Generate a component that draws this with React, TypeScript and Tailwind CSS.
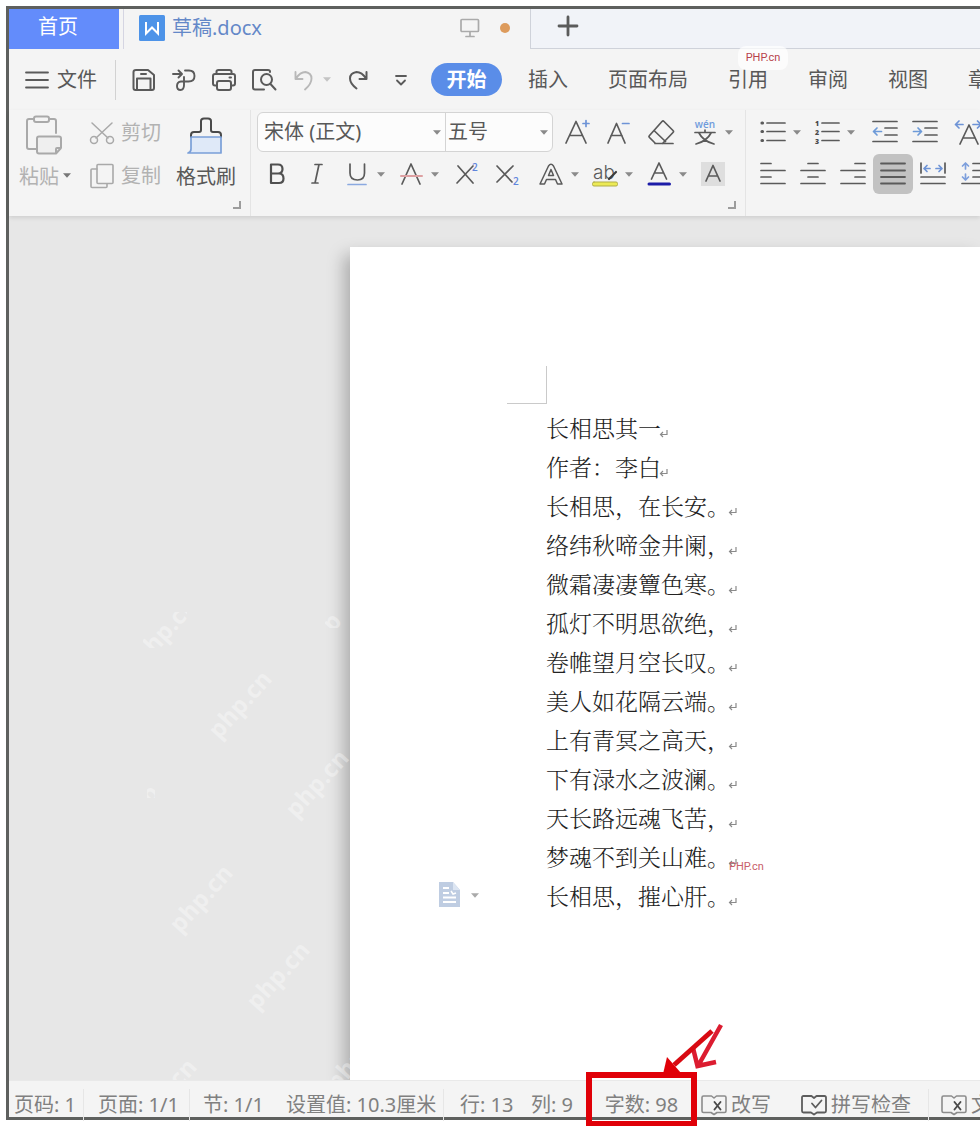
import React from "react";

const lines = [
  "长相思其一",
  "作者：李白",
  "长相思，在长安。",
  "络纬秋啼金井阑，",
  "微霜凄凄簟色寒。",
  "孤灯不明思欲绝，",
  "卷帷望月空长叹。",
  "美人如花隔云端。",
  "上有青冥之高天，",
  "下有渌水之波澜。",
  "天长路远魂飞苦，",
  "梦魂不到关山难。",
  "长相思，摧心肝。",
];

const menus = ["插入", "页面布局", "引用", "审阅", "视图", "章节"];

type IconProps = { w?: number; h?: number; sw?: number; className?: string; children: React.ReactNode };

function Icon({ w = 26, h = 26, sw = 1.7, className = "text-[#5a5a5a]", children }: IconProps) {
  return (
    <svg
      width={w}
      height={h}
      viewBox={`0 0 ${w} ${h}`}
      fill="none"
      stroke="currentColor"
      strokeWidth={sw}
      strokeLinecap="round"
      strokeLinejoin="round"
      className={`shrink-0 ${className}`}
      aria-hidden="true"
    >
      {children}
    </svg>
  );
}

function Caret({ className = "text-[#8a8a8a]" }: { className?: string }) {
  return (
    <svg width="8" height="5" viewBox="0 0 8 5" className={`shrink-0 ${className}`} aria-hidden="true">
      <path d="M0 0.3H8L4 4.7Z" fill="currentColor" />
    </svg>
  );
}

function Tool({ label, drop, active, children }: { label: string; drop?: boolean; active?: boolean; children: React.ReactNode }) {
  return (
    <button
      type="button"
      aria-label={label}
      className={`flex h-10 shrink-0 items-center ${drop ? "w-[54px]" : "w-10"} ${active ? "rounded-md bg-[#c2c2c2]" : ""}`}
    >
      <span className="flex w-10 shrink-0 items-center justify-center">{children}</span>
      {drop && <Caret />}
    </button>
  );
}

function Corner() {
  return (
    <button type="button" aria-label="更多设置" className="absolute right-2 bottom-[6px]">
      <svg width="10" height="9" viewBox="0 0 10 9" fill="none" stroke="#9c9c9c" strokeWidth="2" aria-hidden="true">
        <path d="M8 0V7H1" />
      </svg>
    </button>
  );
}

function BookX() {
  return (
    <Icon w={26} h={22} sw={1.6} className="text-[#8c8c8c]">
      <path d="M13 4L10.500 2H2.500Q1 2 1 3.500V17Q1 18.500 2.500 18.500H10L13 20.500L16 18.500H23.500Q25 18.500 25 17V3.500Q25 2 23.500 2H15.500L13 4" />
      <path d="M13.500 8L19.500 15.500M19.500 8L13.500 15.500" stroke="#4a4a4a" strokeWidth="1.900" />
    </Icon>
  );
}

function BookCheck() {
  return (
    <Icon w={26} h={22} sw={1.8} className="text-[#5c5c5c]">
      <path d="M13 4L10.500 2H2.500Q1 2 1 3.500V17Q1 18.500 2.500 18.500H10L13 20.500L16 18.500H23.500Q25 18.500 25 17V3.500Q25 2 23.500 2H15.500L13 4" />
      <path d="M11 9.500L14.500 13.500L20.500 6.500" />
    </Icon>
  );
}

function Sep() {
  return <span className="h-8 w-px shrink-0 bg-[#e6e6e6]" />;
}

function Mark({ className }: { className: string }) {
  return (
    <span
      aria-hidden="true"
      className={`pointer-events-none absolute flex items-center justify-center overflow-hidden font-['Open_Sans',sans-serif] text-2xl leading-none font-bold text-white/35 ${className}`}
    >
      <span className="-rotate-[48deg]">php.cn</span>
    </span>
  );
}

function TitleBar() {
  return (
    <header className="flex h-10 shrink-0 text-xl leading-none">
      <button type="button" className="w-[110px] shrink-0 bg-[#638cfb] pr-3 pb-1 text-center text-white">首页</button>
      <span className="w-[5px] shrink-0 border-r border-[#d5d5e2]" />
      <div className="flex w-[406px] shrink-0 items-center pb-[3px] pl-[15px]">
        <svg width="26" height="26" viewBox="0 0 26 26" className="shrink-0" aria-hidden="true">
          <rect width="26" height="26" rx="1.500" fill="#4d93e8" />
          <path d="M7 7V18.500L13 12.500L19 18.500V7" fill="none" stroke="#fff" strokeWidth="2" />
        </svg>
        <span className="ml-[7px] text-[#6488c8]">草稿.docx</span>
        <button type="button" aria-label="演示" className="mr-5 ml-auto">
          <Icon w={20} h={20} className="text-[#aaaaaa]">
            <rect x="1" y="1.500" width="17.500" height="12" rx="1" />
            <path d="M10 14V18M6 18.500H14" />
          </Icon>
        </button>
        <span className="mr-5 size-[10px] rounded-full bg-[#dd9b5c]" />
      </div>
      <div className="flex flex-1 items-center border-b border-l border-[#cfd2da] bg-[#f1f3f8] pb-[6px] pl-[26px]">
        <button type="button" aria-label="新建标签">
          <Icon w={22} h={22} sw={2.8} className="text-[#5b5b5b]">
            <path d="M11 2V20M2 11H20" />
          </Icon>
        </button>
      </div>
    </header>
  );
}

function MenuBar() {
  return (
    <nav className="relative flex h-[61px] shrink-0 items-center text-xl">
      <button type="button" className="flex w-[106px] shrink-0 items-center pl-4">
        <Icon w={24} h={18} sw={1.8}>
          <path d="M1 1.500H23M1 9H23M1 16.500H23" />
        </Icon>
        <span className="ml-2">文件</span>
      </button>
      <span className="mr-2 h-10 w-px shrink-0 bg-[#d2d2d2]" />
      <Tool label="保存">
        <Icon w={24} h={24} sw={2}>
          <path d="M1.500 20V4Q1.500 2 4 2H16L22 7V20Q22 22 20 22H3.500Q1.500 22 1.500 20Z" />
          <path d="M5 22V10.500H18.500V22M9 6H14" />
        </Icon>
      </Tool>
      <Tool label="输出为PDF">
        <Icon w={24} h={24} sw={1.9}>
          <path d="M1 6H9M6.500 2.500L10 6L6.500 9.500M13 2.500H17Q22.500 2.500 22.500 8Q22.500 13.500 16.500 13.500H9Q5 14 5 18Q5 22 8.500 22Q12 22 12 17V9" />
        </Icon>
      </Tool>
      <Tool label="打印">
        <Icon w={26} h={24} sw={2}>
          <path d="M5.500 5.500V3.500Q5.500 2 7.500 2H18.500Q20.500 2 20.500 3.500V5.500M6 17.500H4Q2 17.500 2 15.500V8Q2 6 4 6H22Q24 6 24 8V15.500Q24 17.500 22 17.500H20M18.500 9.500H20" />
          <rect x="6" y="13" width="14" height="9" rx="2" />
        </Icon>
      </Tool>
      <Tool label="打印预览">
        <Icon w={26} h={24} sw={2}>
          <path d="M19 4V3.500Q19 2 17 2H4Q2 2 2 4V19.500Q2 21.500 4 21.500H13" />
          <circle cx="15.500" cy="11.500" r="5.500" />
          <path d="M19.500 16L24.500 21.500" />
        </Icon>
      </Tool>
      <button type="button" aria-label="撤销" className="flex w-[54px] shrink-0 items-center pl-2">
        <Icon w={24} h={24} sw={1.9} className="text-[#b8b8b8]">
          <path d="M3.500 4V11H10.500M4 10.500Q8 4 13.500 4Q19.500 5 19.500 10.500Q19.500 16 13 21.500" />
        </Icon>
        <span className="ml-[7px]"><Caret className="text-[#c4c4c4]" /></span>
      </button>
      <Tool label="恢复">
        <Icon w={24} h={24} sw={2}>
          <path d="M20.500 4V11H13.500M20 10.500Q16 4 10.500 4Q4 5 4 10.500Q4 15.500 10.500 20.500" />
        </Icon>
      </Tool>
      <button type="button" aria-label="自定义" className="flex w-[46px] shrink-0 justify-center">
        <Icon w={14} h={14} sw={1.8}>
          <path d="M2 3H12M3 7.500L7 11.500L11 7.500" />
        </Icon>
      </button>
      <button type="button" className="ml-[7px] h-[33px] w-[71px] shrink-0 rounded-full bg-[#5a8de8] text-center leading-none font-bold text-white">开始</button>
      <div className="ml-[26px] flex gap-10">
        {menus.map((m) => (
          <button key={m} type="button" className="shrink-0 whitespace-nowrap">{m}</button>
        ))}
      </div>
      <span className="absolute -top-[3px] left-[729px] flex h-6 w-[50px] items-center justify-center rounded-lg bg-white/70 font-['Roboto',sans-serif] text-[11px] text-[#b8434c]">PHP.cn</span>
    </nav>
  );
}

function Clipboard() {
  return (
    <section aria-label="剪贴板" className="relative flex w-[242px] shrink-0 border-r border-[#e4e4e4] pl-[10px] text-xl">
      <button type="button" className="flex w-[60px] shrink-0 flex-col items-start pt-[5px] text-[#b2b2b2]">
        <Icon w={40} h={40} sw={2} className="ml-[6px] text-[#a9a9a9]">
          <path d="M9 4H4Q2 4 2 6V32Q2 34 4 34H11M24 4H29Q31 4 31 6V18" />
          <rect x="9" y="1.500" width="15" height="5.500" rx="2" />
          <path d="M14 21.500H34Q36 21.500 36 23.500V33L31 38.500H14Q12 38.500 12 36.500V23.500Q12 21.500 14 21.500ZM31 38V34Q31 33 32 33H36" fill="#efefef" />
        </Icon>
        <span className="mt-2 flex items-center whitespace-nowrap leading-7">粘贴<span className="mb-1 ml-1"><Caret className="text-[#777777]" /></span></span>
      </button>
      <div className="ml-2 flex w-[89px] shrink-0 flex-col gap-[3px] pt-[3px] text-[#b2b2b2]">
        <button type="button" className="flex h-10 items-center gap-[6px] pl-[2px] whitespace-nowrap">
          <Icon w={26} h={24} sw={1.5} className="text-[#a9a9a9]">
            <path d="M3 2L19 17M23 2L7 17" />
            <circle cx="5" cy="19" r="3.500" />
            <circle cx="21" cy="19" r="3.500" />
          </Icon>
          剪切
        </button>
        <button type="button" className="flex h-10 items-center gap-[6px] pl-[2px] whitespace-nowrap">
          <Icon w={26} h={26} sw={1.6} className="text-[#a9a9a9]">
            <rect x="8" y="1.500" width="16" height="19" rx="1" />
            <path d="M8 6H3Q2 6 2 7V23.500Q2 24.500 3 24.500H17Q18 24.500 18 23.500V21" />
          </Icon>
          复制
        </button>
      </div>
      <button type="button" className="flex w-[60px] shrink-0 flex-col items-center pt-[7px]">
        <Icon w={38} h={38} sw={2}>
          <rect x="4" y="20" width="30" height="16" fill="#dfe9f8" stroke="none" />
          <path d="M4 20V18Q4 15 7 15H12Q14 15 14 13V4Q14 1.500 17 1.500H21Q24 1.500 24 4V13Q24 15 26 15H31Q34 15 34 18V20" stroke="#4a4a4a" />
          <path d="M4 20H34V36H1Q4 35 4 32Z" stroke="#7a9fd8" strokeWidth="1.700" />
        </Icon>
        <span className="mt-2 leading-7 whitespace-nowrap">格式刷</span>
      </button>
      <Corner />
    </section>
  );
}

function FontGroup() {
  return (
    <section aria-label="字体" className="relative w-[495px] shrink-0 border-r border-[#e4e4e4] pt-[2px] pl-[6px]">
      <div className="flex h-10 items-center">
        <div className="mr-1 flex h-10 w-[296px] shrink-0 overflow-hidden rounded-md border border-[#d4d4d4] bg-[#fcfcfc] text-xl">
          <label className="relative flex w-[188px] items-center border-r border-[#d4d4d4]">
            <select aria-label="字体名称" className="h-full w-full appearance-none bg-transparent pl-[6px] outline-none">
              <option>宋体 (正文)</option>
            </select>
            <span className="pointer-events-none absolute right-1 flex"><Caret /></span>
          </label>
          <label className="relative flex flex-1 items-center">
            <select aria-label="字号" className="h-full w-full appearance-none bg-transparent pl-[2px] outline-none">
              <option>五号</option>
            </select>
            <span className="pointer-events-none absolute right-1 flex"><Caret /></span>
          </label>
        </div>
        <Tool label="增大字号">
          <Icon>
            <path d="M2 24L12 2.500L22 24M5.500 16.500H18.500" />
            <path d="M19 4.500H25M22 1.500V7.500" stroke="#6d93d6" />
          </Icon>
        </Tool>
        <Tool label="减小字号">
          <Icon>
            <path d="M4 24L12.500 4.500L21 24M7 16.500H18" />
            <path d="M18.500 4.500H25" stroke="#6d93d6" />
          </Icon>
        </Tool>
        <span className="ml-1 flex gap-1">
          <Tool label="清除格式">
            <Icon w={28}>
              <path d="M8 24L2.500 18.500Q1.500 17.500 2.500 16.500L15 2.500Q16 1.500 17 2.500L26 11.500Q27 12.500 26 13.500L15.500 24.500M7 11.500L18.500 22.500M8 24.500H26" />
            </Icon>
          </Tool>
          <Tool label="拼音指南" drop>
            <Icon>
              <text x="13" y="9" textAnchor="middle" fontFamily="Open Sans" fontSize="10" fontWeight="600" fill="#6f9bdc" stroke="none">wén</text>
              <path d="M3 13.500H23M13 11V13M7 14Q11 22 22 25M19 14Q15 22 4 25" />
            </Icon>
          </Tool>
        </span>
      </div>
      <div className="mt-[2px] flex h-10 items-center">
        <Tool label="加粗">
          <Icon sw={2.2} className="text-[#505050]">
            <path d="M7 3.500H14Q18.500 3.500 18.500 8Q18.500 12.500 14 12.500H7ZM7 12.500H15Q19.500 12.500 19.500 17.500Q19.500 22 15 22H7Z" />
          </Icon>
        </Tool>
        <Tool label="倾斜">
          <Icon>
            <path d="M11 3.500H18M8 22H14M15 3.500L11 22" />
          </Icon>
        </Tool>
        <Tool label="下划线" drop>
          <Icon>
            <path d="M6 3V12Q6 19 13.500 19Q20.500 19 20.500 12V3" />
            <path d="M4 23.500H22" stroke="#8aa9e0" />
          </Icon>
        </Tool>
        <Tool label="删除线" drop>
          <Icon>
            <path d="M4 23L13 3L22 23" />
            <path d="M3 15H24" stroke="#dda0a2" strokeWidth="2" />
          </Icon>
        </Tool>
        <Tool label="上标">
          <Icon>
            <path d="M6 5L21 22M21 5L5 22" />
            <text x="20" y="10" fontFamily="Open Sans" fontSize="10" fontWeight="600" fill="#5f85dc" stroke="none">2</text>
          </Icon>
        </Tool>
        <span className="ml-[2px]">
          <Tool label="下标">
            <Icon>
              <path d="M3 5L18 21M19 5L3 21" />
              <text x="19" y="24" fontFamily="Open Sans" fontSize="10" fontWeight="600" fill="#5f85dc" stroke="none">2</text>
            </Icon>
          </Tool>
        </span>
        <span className="ml-1 flex">
          <Tool label="文字效果" drop>
            <Icon sw={1.5}>
              <path d="M2 23L10.500 5Q13 1.500 15.500 5L24 23H19.500L17.500 18.500H8.500L6.500 23ZM10.500 14.500H15.500L13 8.500Z" />
            </Icon>
          </Tool>
          <Tool label="突出显示" drop>
            <Icon w={28} h={26}>
              <text x="2" y="18" fontFamily="Inter" fontSize="19" fontWeight="300" fill="#5a5a5a" stroke="none">ab</text>
              <path d="M18 18L25 11" stroke="#3c3c3c" strokeWidth="2.200" />
              <rect x="1.500" y="21" width="25" height="4" rx="1.500" fill="#ecea55" stroke="#b0ad48" strokeWidth="1" />
            </Icon>
          </Tool>
          <Tool label="字体颜色" drop>
            <Icon>
              <path d="M5.500 18L13 2L20.500 18M8.500 12H17.500" />
              <path d="M3 23H23.500" stroke="#1c1ca8" strokeWidth="3" />
            </Icon>
          </Tool>
          <Tool label="字符底纹">
            <Icon>
              <rect x="1" y="1" width="24" height="24" fill="#dedede" stroke="none" />
              <path d="M6 20L13 4.500L20 20M8.500 15H17.500" />
            </Icon>
          </Tool>
        </span>
      </div>
      <Corner />
    </section>
  );
}

function ParagraphGroup() {
  return (
    <section aria-label="段落" className="flex-1 pt-[2px] pl-[7px]">
      <div className="flex h-10 items-center">
        <Tool label="项目符号" drop>
          <Icon sw={1.7}>
            <path d="M7 4H25M7 12.500H25M7 21.500H25" />
            <path d="M2 4H2.500M2 12.500H2.500M2 21.500H2.500" strokeWidth="3.200" />
          </Icon>
        </Tool>
        <Tool label="编号" drop>
          <Icon sw={1.7}>
            <path d="M8 4H25M8 12.500H25M8 21.500H25" />
            <g fontFamily="Open Sans" fontSize="7" fontWeight="800" fill="#4a4a4a" stroke="none">
              <text x="1" y="6.500">1</text>
              <text x="1" y="15.500">2</text>
              <text x="1" y="24.500">3</text>
            </g>
          </Icon>
        </Tool>
        <span className="ml-1 flex">
          <Tool label="减少缩进">
            <Icon sw={1.7}>
              <path d="M1 2.500H25M13 9H25M13 16H25M1 22.500H25" />
              <path d="M1.500 12.500H9.500M5 9L1.500 12.500L5 16" stroke="#6d9ad8" />
            </Icon>
          </Tool>
          <Tool label="增加缩进">
            <Icon sw={1.7}>
              <path d="M1 2.500H25M13 9H25M13 16H25M1 22.500H25" />
              <path d="M1.500 12.500H9.500M6 9L9.500 12.500L6 16" stroke="#6d9ad8" />
            </Icon>
          </Tool>
          <span className="ml-[3px]">
            <Tool label="中文版式">
              <Icon w={28} sw={1.7}>
                <path d="M6 25L15 6L24 25M9 19H21" />
                <path d="M1.500 5.500H9M5 2L1.500 5.500L5 9M19 5.500H27M23.500 2L27 5.500L23.500 9" stroke="#6d93d6" />
              </Icon>
            </Tool>
          </span>
        </span>
      </div>
      <div className="mt-[2px] flex h-10 items-center">
        <Tool label="左对齐">
          <Icon sw={1.7}><path d="M1 2.500H11M1 9.500H25M1 16H11M1 22.500H25" /></Icon>
        </Tool>
        <Tool label="居中">
          <Icon sw={1.7}><path d="M8 2.500H18M1 9.500H25M8 16H18M1 22.500H25" /></Icon>
        </Tool>
        <Tool label="右对齐">
          <Icon sw={1.7}><path d="M15 2.500H25M1 9.500H25M15 16H25M1 22.500H25" /></Icon>
        </Tool>
        <Tool label="两端对齐" active>
          <Icon sw={1.8}><path d="M1 2.500H25M1 9.500H25M1 16H25M1 22.500H25" /></Icon>
        </Tool>
        <Tool label="分散对齐">
          <Icon sw={1.7}>
            <path d="M1 2V12M25 2V12M1 16H25M1 22.500H25" />
            <path d="M4 7.500H10M7 4.500L4 7.500L7 10.500M16 7.500H22M19 4.500L22 7.500L19 10.500" stroke="#6d93d6" />
          </Icon>
        </Tool>
        <Tool label="行距">
          <Icon sw={1.7}>
            <path d="M13 2.500H25M13 9.500H25M13 16H25M2 22.500H25" />
            <path d="M5.500 2V8M2.500 5L5.500 2L8.500 5M5.500 13V19M2.500 16L5.500 19L8.500 16" stroke="#7d9fdc" />
          </Icon>
        </Tool>
      </div>
    </section>
  );
}

function Page() {
  return (
    <article className="relative flex-1 bg-white pb-40 pl-[157px] shadow-[-6px_8px_16px_rgba(0,0,0,0.26)]">
      <div className="h-[119px]" />
      <div className="h-[38px] w-10 border-r border-b border-[#cacaca]" />
      <div className="mt-[6px] pl-[39px] font-['Liberation_Serif','Noto_Serif_CJK_SC','Noto_Sans_CJK_SC',serif] text-[23px] leading-[39px] font-light text-[#222222]">
        {lines.map((line, i) => (
          <p key={line} className="relative flex items-center whitespace-nowrap">
            {line}
            <svg width="10" height="10" viewBox="0 0 10 10" className="mt-2 -ml-[2px]" fill="none" stroke="#8a8a8a" strokeWidth="1.200" aria-hidden="true">
              <path d="M8 1V5.500H1.500M4 3L1.500 5.500L4 8" />
            </svg>
            {i === 11 && (
              <span className="absolute top-[22px] left-[183px] font-['Roboto',sans-serif] text-[11px] leading-none font-normal text-[#c8606a]">PHP.cn</span>
            )}
            {i === 12 && (
              <button type="button" aria-label="粘贴选项" className="absolute top-1 -left-[107px] flex items-center gap-[10px]">
                <svg width="22" height="26" viewBox="0 0 22 26" aria-hidden="true">
                  <path d="M0 0H14L21 8V25H0Z" fill="#bfcde2" />
                  <path d="M14 0V8H21" fill="#dce5f2" />
                  <path d="M4 6H10M4 11H10M4 15.500H17M4 20H17" stroke="#fff" strokeWidth="2" />
                  <path d="M12 9L14 12L17 11" fill="none" stroke="#fff" strokeWidth="1.500" />
                </svg>
                <Caret className="text-[#aaaaaa]" />
              </button>
            )}
          </p>
        ))}
      </div>
    </article>
  );
}

function StatusBar() {
  return (
    <footer className="relative flex h-[37px] shrink-0 border-t border-[#e9e9e9] bg-[#f4f4f4] text-xl leading-none whitespace-nowrap text-[#808080]">
      <div className="flex h-12 w-full items-center">
        <span className="w-[74px] shrink-0 pl-[5px]">页码: 1</span>
        <Sep />
        <span className="w-[105px] shrink-0 pl-[14px]">页面: 1/1</span>
        <Sep />
        <span className="w-[84px] shrink-0 pl-[13px]">节: 1/1</span>
        <span className="w-[169px] shrink-0 pl-3">设置值: 10.3厘米</span>
        <Sep />
        <span className="w-[71px] shrink-0 pl-4">行: 13</span>
        <span className="w-[71px] shrink-0 pl-4">列: 9</span>
        <button type="button" className="relative w-[111px] shrink-0 text-center">
          字数: 98
          <span className="absolute -top-[23px] left-0 h-[55px] w-full border-[6px] border-[#e00008]" />
          <svg width="62" height="58" viewBox="0 0 62 58" className="absolute -top-[74px] left-[76px]" aria-hidden="true">
            <path d="M59 4L36 45M31 27L35.500 45L54 41" fill="none" stroke="#dc1c30" strokeWidth="4.500" />
            <path d="M50 10L12 44" stroke="#d80a12" strokeWidth="5" fill="none" />
            <path d="M1 53L5 36L19 52Z" fill="#e00008" />
          </svg>
        </button>
        <button type="button" className="ml-1 flex w-[100px] shrink-0 items-center gap-1">
          <BookX />
          改写
        </button>
        <button type="button" className="flex w-[127px] shrink-0 items-center gap-1">
          <BookCheck />
          拼写检查
        </button>
        <Sep />
        <button type="button" className="ml-3 flex shrink-0 items-center gap-1">
          <BookX />
          文档校对
        </button>
      </div>
    </footer>
  );
}

export default function App() {
  return (
    <div className="flex min-h-screen flex-col overflow-hidden bg-white pt-[6px] pb-[6px] pl-[6px] font-['Noto_Sans','Noto_Sans_CJK_SC',sans-serif] text-[#585858]">
      <div className="flex flex-1 flex-col border-t-[3px] border-b-[3px] border-l-[3px] border-[#5e605e] bg-[#f4f4f4]">
        <TitleBar />
        <MenuBar />
        <div className="relative z-10 flex h-[106px] shrink-0 bg-[#f4f4f4] shadow-[0_2px_4px_rgba(0,0,0,0.10)]">
          <Clipboard />
          <FontGroup />
          <ParagraphGroup />
        </div>
        <main className="relative flex flex-1 overflow-hidden bg-[#e7e7e7] pt-[31px] pl-[341px]">
          <Page />
          <Mark className="top-[396px] left-[134px] h-9 w-11" />
          <Mark className="top-[396px] left-[316px] h-4 w-4" />
          <Mark className="top-[438px] left-[181px] size-[100px]" />
          <Mark className="top-[517px] left-[258px] size-[100px]" />
          <Mark className="top-[570px] left-[138px] h-3 w-2" />
          <Mark className="top-[632px] left-[142px] size-[100px]" />
          <Mark className="top-[709px] left-[219px] size-[100px]" />
          <Mark className="top-[826px] left-[106px] size-[100px]" />
          <Mark className="top-[790px] left-[299px] size-[100px]" />
        </main>
        <StatusBar />
      </div>
    </div>
  );
}
